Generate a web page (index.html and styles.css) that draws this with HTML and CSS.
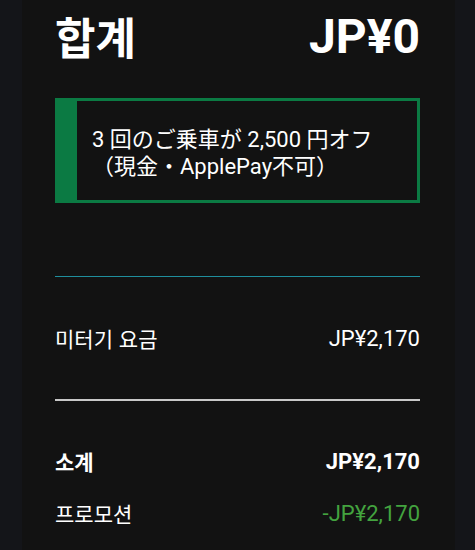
FILE: index.html
```html
<!DOCTYPE html>
<html lang="ko">
<head>
  <meta charset="utf-8">
  <title>합계</title>
  <link rel="stylesheet" href="styles.css">
</head>
<body>
  <div class="sheet">
    <div class="total-row">
      <span class="total-label">합계</span>
      <span class="total-amount">JP¥0</span>
    </div>

    <div class="promo-box" lang="ja">
      <p>3 回のご乗車が 2,500 円オフ<br>（現金・ApplePay不可）</p>
    </div>

    <hr class="line-teal">

    <div class="fare-row">
      <span class="label">미터기 요금</span>
      <span class="amount">JP¥2,170</span>
    </div>

    <hr class="line-gray">

    <div class="fare-row subtotal">
      <span class="label">소계</span>
      <span class="amount">JP¥2,170</span>
    </div>
    <div class="fare-row promo">
      <span class="label">프로모션</span>
      <span class="amount">-JP¥2,170</span>
    </div>
  </div>
</body>
</html>
```

FILE: styles.css
```css
body {
  margin: 0;
  background-color: #141519;
  font-family: Roboto, "Noto Sans CJK KR", "Noto Sans CJK JP", sans-serif;
  color: #fff;
}

.sheet {
  margin: 0 20px 0 22px;
  min-height: 550px;
  background-color: #121212;
  padding: 0 35px 0 33px;
  box-sizing: border-box;
}

.total-row {
  display: flex;
  justify-content: space-between;
  align-items: center;
  height: 72px;
  font-size: 48px;
  font-weight: 700;
}

.total-label {
  font-family: "Noto Sans CJK KR", sans-serif;
  font-size: 44px;
}

.promo-box {
  margin-top: 26px;
  height: 105px;
  box-sizing: border-box;
  border: 3px solid #0b7a43;
  border-left-width: 22px;
  display: flex;
  align-items: center;
  padding: 4px 0 0 15px;
}

.promo-box p {
  margin: 0;
  font-family: Roboto, "Noto Sans CJK JP", sans-serif;
  font-size: 22px;
  line-height: 27px;
}

hr {
  border: none;
  margin: 0;
  height: 1px;
}

.line-teal {
  margin-top: 73px;
  background-color: #1f8e9c;
}

.line-gray {
  background-color: #c8c8c8;
  height: 2px;
}

.fare-row {
  display: flex;
  justify-content: space-between;
  align-items: center;
  font-size: 22px;
}

.fare-row .label {
  font-family: "Noto Sans CJK KR", sans-serif;
  font-size: 21px;
}

.line-teal + .fare-row {
  height: 122px;
}

.subtotal {
  margin-top: 38px;
  height: 44px;
  font-weight: 700;
}

.promo {
  height: 60px;
}

.promo .amount {
  color: #43a33f;
}
```
